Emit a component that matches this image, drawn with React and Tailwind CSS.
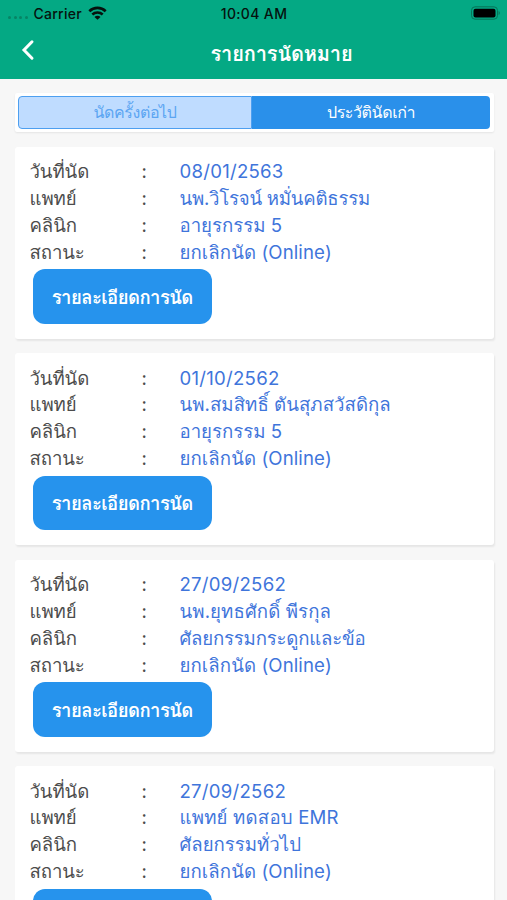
import React, { useState } from "react";

const appointments = [
  { id: 1, date: "08/01/2563", doctor: "นพ.วิโรจน์ หมั่นคติธรรม", clinic: "อายุรกรรม 5", status: "ยกเลิกนัด (Online)", doctorClass: "tracking-[-0.25px]" },
  { id: 2, date: "01/10/2562", doctor: "นพ.สมสิทธิ์ ตันสุภสวัสดิกุล", clinic: "อายุรกรรม 5", status: "ยกเลิกนัด (Online)", doctorClass: "tracking-[0.05px]" },
  { id: 3, date: "27/09/2562", doctor: "นพ.ยุทธศักดิ์ พีรกุล", clinic: "ศัลยกรรมกระดูกและข้อ", status: "ยกเลิกนัด (Online)", doctorClass: "tracking-[0.1px]", clinicClass: "tracking-[-0.2px]" },
  { id: 4, date: "27/09/2562", doctor: "แพทย์ ทดสอบ EMR", clinic: "ศัลยกรรมทั่วไป", status: "ยกเลิกนัด (Online)", doctorClass: "tracking-[0.2px]" },
];

const StatusBar = () => (
  <div className="grid grid-cols-3 items-center h-[26px] pl-2 pr-[7px] text-[14px] font-medium text-[#06120e]">
    <div className="flex items-center">
      <div className="flex gap-[2.5px] mt-2 mr-[6px]">
        {[0, 1, 2, 3].map((dot) => (
          <span key={dot} className="w-[3px] h-[3px] rounded-full bg-[#078465]" />
        ))}
      </div>
      <span className="tracking-[0.25px]">Carrier</span>
      <svg className="ml-[6px]" width="19" height="14" viewBox="0 0 19 14" fill="none" stroke="currentColor">
        <path d="M1.3 5.2a11.8 11.8 0 0 1 16.4 0" strokeWidth="2.6" />
        <path d="M4.3 8.5a7.5 7.5 0 0 1 10.4 0" strokeWidth="2.5" />
        <path d="M9.5 13.8 6.5 10.9a4.2 4.2 0 0 1 6 0Z" fill="currentColor" stroke="none" />
      </svg>
    </div>
    <span className="text-center tracking-[0.35px]">10:04 AM</span>
    <svg className="justify-self-end" width="30" height="14" viewBox="0 0 30 14">
      <rect x="1.5" y="0.8" width="26" height="12.4" rx="3.6" fill="none" stroke="#067458" />
      <rect x="3.5" y="2.8" width="22" height="8.6" rx="2" fill="#000" />
      <path d="M28.6 5v4q1.2-.6 1.2-2T28.6 5Z" fill="#067458" />
    </svg>
  </div>
);

const Row = ({ label, value, valueClass = "" }) => (
  <div className="flex h-[26.9px] items-center text-[18.6px] whitespace-nowrap">
    <span className="w-[112px] text-[#4c4c4c] tracking-[-0.1px]">{label}</span>
    <span className="w-[38px] text-[#4c4c4c]">:</span>
    <span className={`text-[#3f75db] ${valueClass}`}>{value}</span>
  </div>
);

const AppointmentCard = ({ item, children }) => (
  <div className="h-[192px] shrink-0 rounded-[3px] bg-white pl-[15px] pr-4 pt-3 shadow-[1px_2px_2px_rgba(0,0,0,0.07)]">
    <Row label="วันที่นัด" value={item.date} valueClass="tracking-[0.25px]" />
    <Row label="แพทย์" value={item.doctor} valueClass={item.doctorClass} />
    <Row label="คลินิก" value={item.clinic} valueClass={item.clinicClass} />
    <Row label="สถานะ" value={item.status} valueClass="tracking-[0.1px]" />
    <button className="ml-[3px] mt-[3px] block h-[54.5px] w-[179.5px] rounded-[12px] bg-[#2693ed] pt-[3px] text-[18.5px] font-bold tracking-[-0.55px] text-white">
      {children}
    </button>
  </div>
);

const App = () => {
  const [tab, setTab] = useState("history");

  return (
    <div className="flex h-[900px] w-full flex-col overflow-hidden bg-[#f7f7f7] font-['Inter','Loma',sans-serif]">
      <header className="h-[79px] shrink-0 bg-[#04a984]">
        <StatusBar />
        <div className="flex h-[53px] items-center">
          <button className="w-14 pl-[21px] pb-[5px]">
            <svg width="14" height="22" viewBox="0 0 14 22" fill="none" stroke="#fff" strokeWidth="3">
              <path d="M11 2.8 3 11l8 8.2" strokeLinecap="round" />
            </svg>
          </button>
          <h1 className="flex-1 pt-[3px] text-center text-[20px] font-bold tracking-[-0.15px] text-white">รายการนัดหมาย</h1>
        </div>
      </header>

      <main className="flex flex-col pl-[14.5px] pr-[13px] pt-[14px]">
        <div className="flex h-[38.5px] shrink-0 rounded-[2px] bg-white py-[3px] pl-[3.5px] pr-[4px] text-[16px] tracking-[-0.4px] shadow-[0_1px_2px_rgba(0,0,0,0.08)]">
          <button
            className={`w-[234px] rounded-l-[4px] border border-[#4d9ff0] ${tab === "next" ? "bg-[#2a90ea] text-white" : "bg-[#bfdcff] text-[#5ba5f2]"}`}
            onClick={() => setTab("next")}
          >
            นัดครั้งต่อไป
          </button>
          <button
            className={`flex-1 rounded-r-[4px] ${tab === "history" ? "bg-[#2a90ea] text-white" : "bg-[#bfdcff] text-[#5ba5f2]"}`}
            onClick={() => setTab("history")}
          >
            ประวัตินัดเก่า
          </button>
        </div>

        <div className="flex flex-col gap-[14.5px] pt-[15px]">
          {appointments.map((item, index) => (
            <AppointmentCard key={item.id} item={item}>
              {index < 3 && "รายละเอียดการนัด"}
            </AppointmentCard>
          ))}
        </div>
      </main>
    </div>
  );
};

export default App;
